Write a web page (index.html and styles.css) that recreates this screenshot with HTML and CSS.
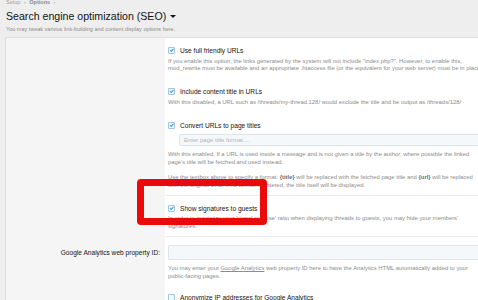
FILE: index.html
```html
<!DOCTYPE html>
<html lang="en">
<head>
    <meta charset="UTF-8">
    <title>Search engine optimization (SEO)</title>
    <link rel="stylesheet" href="styles.css">
</head>
<body>

    <div class="page">
        <!-- Header -->
        <div class="crumbs">Setup <span class="sep">&rsaquo;</span> <b>Options</b> <span class="sep">&rsaquo;</span></div>
        <h1 class="title">Search engine optimization (SEO) <span class="caret"></span></h1>
        <p class="intro">You may tweak various link-building and content display options here.</p>

        <!-- Options block -->
        <div class="block">
            <div class="row">
                <div class="row-label"></div>
                <div class="row-body">
                    <label class="check"><span class="box checked"></span>Use full friendly URLs</label>
                    <p class="hint">If you enable this option, the links generated by the system will not include "index.php?". However, to enable this,<br>mod_rewrite must be available and an appropriate .htaccess file (or the equivalent for your web server) must be in place.</p>

                    <label class="check"><span class="box checked"></span>Include content title in URLs</label>
                    <p class="hint">With this disabled, a URL such as /threads/my-thread.128/ would exclude the title and be output as /threads/128/</p>

                    <label class="check"><span class="box checked"></span>Convert URLs to page titles</label>
                    <input type="text" class="input input-sub" placeholder="Enter page title format....">
                    <p class="hint hint-sub">With this enabled, If a URL is used inside a message and is not given a title by the author, where possible the linked<br>page's title will be fetched and used instead.<br><br>Use the textbox above to specify a format. <b>{title}</b> will be replaced with the fetched page title and <b>{url}</b> will be replaced<br>with the original URL. If no format is entered, the title itself will be displayed.</p>
                </div>
            </div>

            <div class="row">
                <div class="row-label"></div>
                <div class="row-body row-body-short">
                    <label class="check"><span class="box checked"></span>Show signatures to guests</label>
                    <p class="hint">In order to maximize your 'signal to noise' ratio when displaying threads to guests, you may hide your members'<br>signatures.</p>
                </div>
            </div>

            <div class="row">
                <div class="row-label"><span class="label-text">Google Analytics web property ID:</span></div>
                <div class="row-body">
                    <input type="text" class="input">
                    <p class="hint hint-sub">You may enter your <a href="#">Google Analytics</a> web property ID here to have the Analytics HTML automatically added to your<br>public-facing pages.</p>

                    <label class="check check-last"><span class="box"></span>Anonymize IP addresses for Google Analytics</label>
                </div>
            </div>
        </div>
    </div>

    <!-- annotation drawn over the screenshot -->
    <div class="callout"></div>

</body>
</html>
```

FILE: styles.css
```css
body {
    font-family: 'Liberation Sans', Arial, sans-serif;
    background-color: #eeeeee;
    color: #141414;
    margin: 0;
    padding: 0;
    overflow: hidden;
    height: 300px;
}

.page {
    padding-left: 6px;
    width: 640px;
}

.crumbs {
    font-size: 5.5px;
    line-height: 8px;
    margin-top: -2px;
    color: #a0a0a0;
}

.crumbs b {
    color: #8a8a8a;
}

.crumbs .sep {
    padding: 0 2px;
}

.title {
    font-size: 10.6px;
    font-weight: 400;
    line-height: 14px;
    margin: 3px 0 0;
    display: flex;
    align-items: center;
    gap: 4px;
}

.caret {
    width: 0;
    height: 0;
    border-left: 3px solid transparent;
    border-right: 3px solid transparent;
    border-top: 3px solid #141414;
}

.intro {
    font-size: 5.5px;
    line-height: 8px;
    margin: 2px 0 0;
    color: #8c8c8c;
}

.block {
    margin: 4px 0 0 -1px;
    border-top: 1px solid #dedede;
    border-left: 1px solid #dedede;
    background-color: #ffffff;
}

.row {
    display: grid;
    grid-template-columns: 159px 1fr;
}

.row-label {
    background-color: #f5f5f5;
    text-align: right;
    padding: 8px 5px 0 0;
}

.label-text {
    display: block;
    font-size: 6.6px;
    line-height: 15px;
}

.row-body {
    padding: 8px 0 5.5px 3px;
    border-bottom: 1px solid #ebebeb;
}

.row-body-short {
    padding: 8px 0 6px 3px;
}

.row:last-child .row-body {
    border-bottom: none;
    padding-top: 7.5px;
}

.check {
    display: flex;
    align-items: center;
    font-size: 6.6px;
    line-height: 9px;
    margin-top: 14.5px;
}

.check:first-child {
    margin-top: 0;
}

.check-last {
    margin-top: 12.5px;
}

.box {
    width: 5px;
    height: 5px;
    border: 1px solid #9cc6e4;
    border-radius: 1px;
    background-color: #f2f8fc;
    margin-right: 5px;
    position: relative;
}

.box.checked::after {
    content: '';
    position: absolute;
    left: 1.5px;
    top: 0.3px;
    width: 1.2px;
    height: 2.6px;
    border-right: 1px solid #4a98cf;
    border-bottom: 1px solid #4a98cf;
    transform: rotate(45deg);
}

.hint {
    font-size: 5.9px;
    line-height: 7.6px;
    color: #8c8c8c;
    margin: 2.5px 0 0;
    white-space: nowrap;
}

.hint-sub {
    margin-top: 5px;
}

.hint b {
    color: #6e6e6e;
}

.hint a {
    color: #8c8c8c;
}

.input {
    display: block;
    box-sizing: border-box;
    width: 420px;
    height: 15px;
    margin: 0;
    padding: 0 4px;
    font-family: inherit;
    font-size: 6px;
    background-color: #f5f8fb;
    border: 1px solid #dfe4ea;
    border-radius: 2px;
}

.input-sub {
    margin: 4.5px 0 0 11px;
    height: 12px;
}

.input::placeholder {
    color: #b4b4b4;
}

.callout {
    position: absolute;
    left: 137px;
    top: 179px;
    width: 116px;
    height: 32px;
    border: 7px solid #eb0a0a;
    border-radius: 4px;
}
```
